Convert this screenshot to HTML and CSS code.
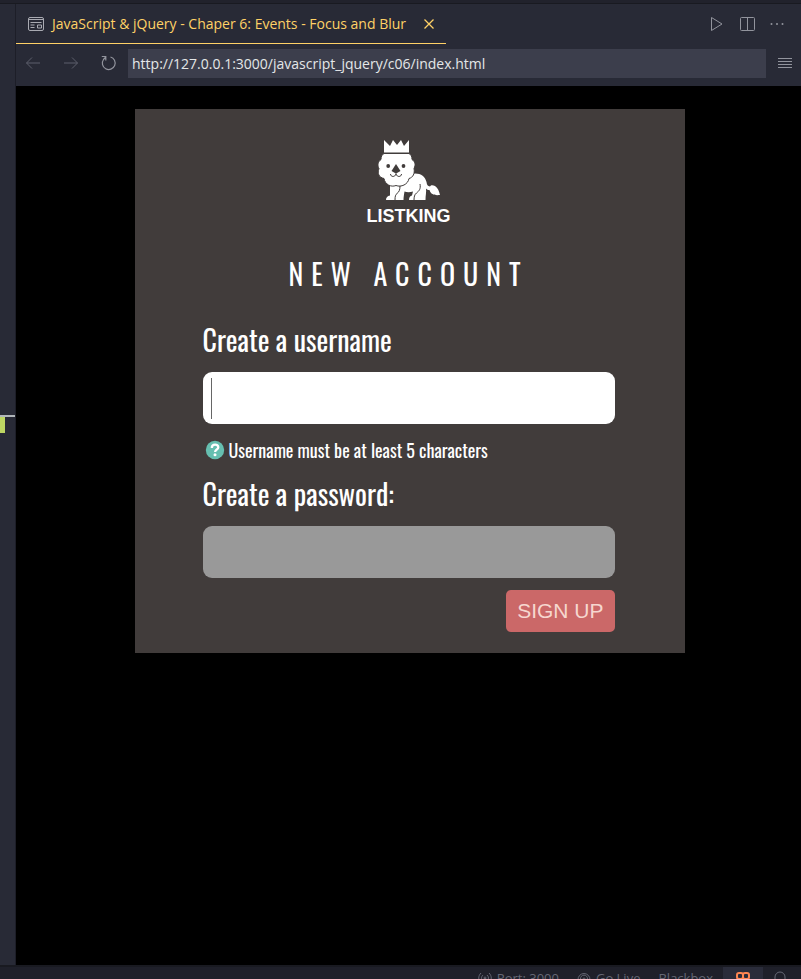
FILE: index.html
```
<!DOCTYPE html>
<html lang="en">
<head>
<meta charset="utf-8">
<title>JavaScript &amp; jQuery - Chaper 6: Events - Focus and Blur</title>
<link rel="stylesheet" href="styles.css">
</head>
<body>
<div class="window">
  <div class="workspace">
    <aside class="gutter">
      <div class="gutter-mark"></div>
    </aside>
    <div class="editor">
      <header class="tabs">
        <div class="tab">
          <svg class="icon" width="16" height="16" viewBox="0 0 16 16" fill="none" stroke="#a9aab2"><rect x=".5" y="1.500" width="15" height="13" rx="1.500"/><path d="M1 3.500h14M2.500 6.500h11M2.500 9h4M2.500 11.500h4M9.500 9h4v3h-4z"/></svg>
          <span>JavaScript &amp; jQuery - Chaper 6: Events - Focus and Blur</span>
          <button class="tool close" aria-label="Close tab"><svg width="10" height="10" viewBox="0 0 10 10" fill="none" stroke="currentColor" stroke-width="1.300"><path d="M.5.5l9 9M9.500.5l-9 9"/></svg></button>
        </div>
        <div class="tab-actions">
          <button class="tool" aria-label="Run"><svg width="16" height="16" viewBox="0 0 16 16" fill="none" stroke="currentColor"><path d="M2.500 1.500v13L13 8z"/></svg></button>
          <button class="tool" aria-label="Split editor"><svg width="16" height="16" viewBox="0 0 16 16" fill="none" stroke="currentColor"><rect x="1.500" y="1.500" width="14" height="13" rx="1"/><path d="M8.500 1.500v13"/></svg></button>
          <button class="tool" aria-label="More actions"><svg width="16" height="16" viewBox="0 0 16 16" fill="currentColor"><circle cx="2.500" cy="8" r="1"/><circle cx="8" cy="8" r="1"/><circle cx="13.500" cy="8" r="1"/></svg></button>
        </div>
      </header>
      <nav class="address-bar">
        <button class="tool dim" aria-label="Back"><svg width="16" height="16" viewBox="0 0 16 16" fill="none" stroke="currentColor"><path d="M15 8H1.500M7 2.500L1.500 8 7 13.500"/></svg></button>
        <button class="tool dim" aria-label="Forward"><svg width="16" height="16" viewBox="0 0 16 16" fill="none" stroke="currentColor"><path d="M1 8h13.500M9 2.500L14.500 8 9 13.500"/></svg></button>
        <button class="tool" aria-label="Reload"><svg width="16" height="16" viewBox="0 0 16 16" fill="none" stroke="currentColor" stroke-width="1.200"><path d="M.8 1.500h4v4M4.800 2L2.500 4.500A6.400 6.400 0 1 0 9.500 2"/></svg></button>
        <input class="url" type="text" aria-label="Address" value="http://127.0.0.1:3000/javascript_jquery/c06/index.html">
        <button class="tool menu" aria-label="Menu"><svg width="16" height="16" viewBox="0 0 16 16" fill="none" stroke="currentColor"><path d="M1 3.500h14M1 6.500h14M1 9.500h14M1 12.500h14"/></svg></button>
      </nav>
      <main class="page">
        <form class="card">
          <div class="logo">
            <svg width="86" height="62" viewBox="2 4 86 62" fill="#fff" aria-hidden="true">
              <path d="M20 5l6 6 3-6 4 5 4-5 3 6 5-6v12.500H20z"/>
              <path d="M46 39c9-2 15 1 16.500 8 .5 3 1 4 3.500 4.500 1-2 3-1.500 5-.5 3 2 4 5 5 9-5 .5-9 0-10.500-5-1.500 0-2.500-.5-3.500-1.500.5 4-.5 7-.5 11.500H45c0-2.500 1-4 3-4.500l1-4c-3 1-6 1-8.500 0-.5 3-1 6-1 8.500H22c0-2.500 1.500-4 4-4.500V45z"/>
              <path d="M20 18.500h25c2 1 3 3 3 6 3 2 4 5 2 9 1 5-1 9-5 10-1 6-8 9-13 7-5 2-11-1-12-7-5-1-7-5-5-10-2-3-1-7 2-9 0-3 1-5 3-6z" stroke="#413c3b"/>
              <g fill="none" stroke="#413c3b"><path d="M36 51c0 4-1 6-3 7.500-1.500 1-2 3-2 6.500M56 49c1 5-1 7-3.500 9-2 1.500-2.500 4-2.500 7"/><path d="M32 35v4c-1 3.500-5.500 3-5.500 0M32 39c1 3.500 5.500 3 5.500 0"/></g>
              <g fill="#413c3b"><path d="M32 29l4.500 7-3.500 2h-2l-3.500-2z"/><circle cx="24.200" cy="31" r="1.900"/><circle cx="39.500" cy="31" r="1.900"/></g>
            </svg>
            <div class="logo-name">LISTKING</div>
          </div>
          <h1>NEW ACCOUNT</h1>
          <label for="username">Create a username</label>
          <input class="field focused" id="username" type="text" aria-describedby="hint">
          <div class="hint" id="hint">
            <svg width="20" height="20" viewBox="0 0 20 20"><circle cx="10" cy="10" r="9.200" fill="#66bfb0"/><path d="M6.800 8c0-4.500 6.500-4.200 6.500-.8 0 2.400-3.200 2.200-3.200 4.800" fill="none" stroke="#fff" stroke-width="2.300"/><circle cx="10" cy="14.800" r="1.500" fill="#fff"/></svg>
            <span>Username must be at least 5 characters</span>
          </div>
          <label for="password">Create a password:</label>
          <input class="field muted" id="password" type="password">
          <button class="submit" type="submit">SIGN UP</button>
        </form>
      </main>
    </div>
  </div>
  <footer class="status">
    <div class="status-item"><svg width="14" height="16" viewBox="0 0 14 16" fill="none" stroke="currentColor"><path d="M3 2C0 5 0 9 3 12M11 2c3 3 3 7 0 10M5 4C3 6 3 8 5 10M9 4c2 2 2 4 0 6M7 7l-3 8M7 7l3 8"/><circle cx="7" cy="7" r="1"/></svg><span>Port: 3000</span></div>
    <div class="status-item"><svg width="14" height="16" viewBox="0 0 14 16" fill="none" stroke="currentColor"><path d="M3 13a6 6 0 1 1 8 0M5 10.500a3.500 3.500 0 1 1 4 0M7 8v7"/><circle cx="7" cy="8" r="1"/></svg><span>Go Live</span></div>
    <div class="status-item"><span>Blackbox</span></div>
    <div class="status-item highlight"><svg width="16" height="16" viewBox="0 0 16 16" fill="none" stroke="#ff8652" stroke-width="2"><rect x="2" y="2" width="6" height="6" rx="2"/><rect x="8" y="2" width="6" height="6" rx="2"/><path d="M2 8v5c4 2 8 2 12 0V8"/></svg></div>
    <div class="status-item bell"><svg width="14" height="16" viewBox="0 0 14 16" fill="none" stroke="currentColor"><path d="M2 12V6a5 5 0 0 1 10 0v6l1 1H1z"/></svg></div>
  </footer>
</div>
</body>
</html>
```
FILE: styles.css
```
* { box-sizing: border-box; }

body {
  margin: 0;
  background: #282a36;
  font-family: "Open Sans", "Noto Sans", sans-serif;
  font-size: 14px;
}

button, input { font: inherit; }
svg { display: block; flex: none; }

.window {
  display: flex;
  flex-direction: column;
  height: 100vh;
  overflow: hidden;
  border-top: 3px solid #21222c;
}

.workspace {
  display: flex;
  flex: 1;
  min-height: 0;
  border-top: 1px solid #191a21;
}

.gutter {
  flex: 0 0 16px;
  padding-top: 411px;
  border-right: 1px solid #1d1e28;
}

.gutter-mark {
  height: 18px;
  border-top: 2px solid #b1b6ba;
  background: linear-gradient(90deg, #bdd663 5px, transparent 5px);
}

.editor {
  display: flex;
  flex: 1;
  flex-direction: column;
  min-width: 0;
}

.tabs {
  display: flex;
  justify-content: space-between;
  height: 40px;
}

.tab {
  display: flex;
  align-items: center;
  gap: 8px;
  padding: 0 12px;
  border-bottom: 1px solid #ffd166;
  color: #ffd166;
  white-space: nowrap;
}

.tab-actions {
  display: flex;
  align-items: center;
  gap: 14px;
  padding-right: 16px;
}

.tool {
  padding: 0;
  border: 0;
  background: none;
  color: #92949d;
}

.tool.close { color: #ffd166; margin-left: 10px; }
.tool.dim { color: #5d5f6c; }

.address-bar {
  display: flex;
  align-items: center;
  gap: 22px;
  height: 42px;
  padding: 0 8px 4px 9px;
}

.url {
  flex: 1;
  min-width: 0;
  height: 29px;
  margin-left: -11px;
  padding: 0 4px;
  border: 0;
  background: #3c3e4c;
  color: #e4e7e8;
}

.menu { margin-left: -11px; }

.page {
  flex: 1;
  min-height: 0;
  padding: 23px 16px 23px 18px;
  background: #000;
}

.card {
  display: flex;
  flex-direction: column;
  max-width: 550px;
  margin: 0 auto;
  padding: 30px 70px 21px 68px;
  background: #413c3b;
  color: #fff;
  font-family: Oswald, "Liberation Sans Narrow", "Liberation Sans", sans-serif;
}

.logo {
  display: flex;
  flex-direction: column;
  align-items: center;
}

.logo-name {
  margin-top: 5px;
  font: bold 18px/20px "Liberation Sans", Arial, sans-serif;
}

h1 {
  margin: 26px 0 24px;
  font-size: 28px;
  font-weight: 400;
  line-height: 44px;
  letter-spacing: 8px;
  text-align: center;
}

label {
  font-size: 28px;
  line-height: 40px;
}

.field {
  width: 100%;
  height: 52px;
  margin-top: 12px;
  padding: 0 8px;
  border: 0;
  border-radius: 9px;
  outline: 0;
  background: #fff;
  font-size: 28px;
}

.focused {
  background: #fff linear-gradient(#666, #666) 8px center / 1px 41px no-repeat;
}

.muted { background: #999; }

.hint {
  display: flex;
  align-items: center;
  gap: 4px;
  height: 32px;
  margin: 10px 0 8px;
  padding-left: 2px;
  font-size: 18px;
  white-space: nowrap;
}

.submit {
  align-self: flex-end;
  height: 42px;
  margin-top: 12px;
  padding: 0 11px;
  border: 0;
  border-radius: 5px;
  background: #cb6868;
  color: #f6d7cf;
  font: 21px "Liberation Sans", Arial, sans-serif;
}

.status {
  display: flex;
  flex: 0 0 14px;
  min-height: 0;
  justify-content: flex-end;
  gap: 18px;
  overflow: hidden;
  border-top: 2px solid #191a21;
  background: #1f202a;
  color: #666875;
  font-size: 13px;
  line-height: 18px;
}

.status-item {
  display: flex;
  gap: 5px;
  height: 24px;
  padding-top: 2px;
}

.status-item svg { margin-top: 2px; }

.highlight {
  margin: 0 -8px;
  padding: 2px 12px;
  background: #2a2c3a;
}

.bell { padding-right: 14px; }
```
